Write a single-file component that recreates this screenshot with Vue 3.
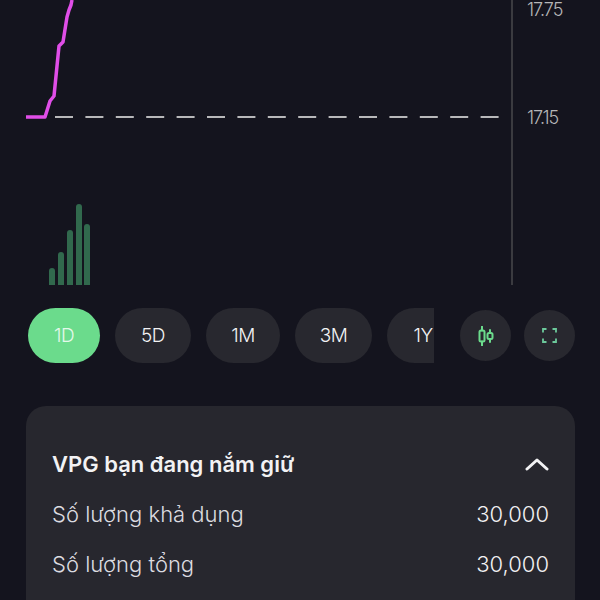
<template>
  <div class="screen">
    <div class="chart">
      <svg class="chart-svg" width="600" height="285" viewBox="0 0 600 285">
        <line x1="55" y1="117" x2="500" y2="117" class="ref-line" />
        <line x1="512" y1="0" x2="512" y2="285" class="axis-line" />
        <polyline :points="pricePoints" class="price-line" />
        <path
          v-for="bar in volumeBars"
          :key="bar.x"
          :d="`M${bar.x} 285V${bar.top + 3}a3 3 0 0 1 6 0V285Z`"
          class="volume-bar"
        />
      </svg>
      <span class="price-label top">17.75</span>
      <span class="price-label base">17.15</span>
    </div>

    <div class="controls">
      <div class="ranges">
        <button
          v-for="range in ranges"
          :key="range"
          type="button"
          class="range-btn"
          :class="{ active: range === activeRange }"
        >
          {{ range }}
        </button>
      </div>
      <button type="button" class="icon-btn" aria-label="Candles">
        <svg width="18" height="20" viewBox="0 0 18 20" fill="none" stroke="#6bdb8c" stroke-width="2">
          <path d="M5 0.5v4M5 15.5v4M13 4v3M13 13v3" stroke-linecap="round" />
          <rect x="2.5" y="4.5" width="5" height="11" rx="1.5" />
          <rect x="10.5" y="7" width="5" height="6" rx="1.5" />
        </svg>
      </button>
      <button type="button" class="icon-btn" aria-label="Fullscreen">
        <svg width="15" height="15" viewBox="0 0 15 15" fill="none" stroke="#6cc99b" stroke-width="1.8">
          <path d="M1 4.5V1h3.5M10.5 1H14v3.5M14 10.5V14h-3.5M4.5 14H1v-3.5" />
        </svg>
      </button>
    </div>

    <section class="holding">
      <div class="holding-head">
        <h2>VPG bạn đang nắm giữ</h2>
        <svg width="24" height="14" viewBox="0 0 24 14" fill="none" stroke="#f2f2f4" stroke-width="3" stroke-linecap="round" stroke-linejoin="round">
          <path d="M2 12L12 3l10 9" />
        </svg>
      </div>
      <div v-for="row in rows" :key="row.label" class="holding-row">
        <span>{{ row.label }}</span>
        <span class="value">{{ row.value }}</span>
      </div>
    </section>
  </div>
</template>

<script setup>
const pricePoints = '26,117 45,117 50,101 54,96 59,46 63,42 67,17 69,10 71,5 72,0'

const volumeBars = [
  { x: 49, top: 268 },
  { x: 58, top: 252 },
  { x: 67, top: 230 },
  { x: 76, top: 204 },
  { x: 84, top: 224 },
]

const ranges = ['1D', '5D', '1M', '3M', '1Y']
const activeRange = '1D'

const rows = [
  { label: 'Số lượng khả dụng', value: '30,000' },
  { label: 'Số lượng tổng', value: '30,000' },
]
</script>

<style scoped>
.screen {
  width: 600px;
  height: 600px;
  overflow: hidden;
  background: #14141e;
  font-family: Inter, "Noto Sans", sans-serif;
  color: #f2f2f4;
}
.chart {
  position: relative;
  height: 285px;
}
.chart-svg {
  display: block;
}
.ref-line {
  stroke: #b8b8ba;
  stroke-width: 2;
  stroke-dasharray: 18 12.4;
}
.axis-line {
  stroke: #3b3b40;
  stroke-width: 2;
}
.price-line {
  fill: none;
  stroke: #e04ee8;
  stroke-width: 3.5;
  stroke-linejoin: round;
}
.volume-bar {
  fill: #31694d;
}
.price-label {
  position: absolute;
  left: 527px;
  font-size: 18px;
  font-weight: 300;
  letter-spacing: -1px;
  line-height: 22px;
  color: #b6b6b8;
}
.price-label.top {
  top: -1px;
}
.price-label.base {
  top: 107px;
}
.controls {
  display: flex;
  align-items: center;
  padding: 23px 25px 0 28px;
}
.ranges {
  display: flex;
  gap: 15px;
  width: 406px;
  overflow: hidden;
  flex-shrink: 0;
}
.range-btn {
  flex: 0 0 76px;
  height: 55px;
  border: none;
  border-radius: 28px;
  padding: 0;
  background: #28282f;
  color: #f2f2f4;
  font: 300 19px Inter, "Noto Sans", sans-serif;
  letter-spacing: -0.5px;
}
.range-btn:nth-child(3) {
  flex-basis: 74px;
}
.range-btn:nth-child(4) {
  flex-basis: 77px;
}
.range-btn:nth-child(5) {
  flex-basis: 72px;
}
.range-btn.active {
  flex-basis: 72px;
  background: #6bdb8c;
  color: #e4f8ea;
}
.icon-btn {
  width: 51px;
  height: 51px;
  margin-left: 13px;
  border: none;
  border-radius: 50%;
  padding: 0;
  background: #28282f;
  display: flex;
  align-items: center;
  justify-content: center;
}
.controls .ranges + .icon-btn {
  margin-left: 26px;
}
.holding {
  margin: 43px 25px 0 26px;
  padding: 35px 26px 0 26px;
  height: 240px;
  box-sizing: border-box;
  border-radius: 20px;
  background: #27272e;
}
.holding-head {
  display: flex;
  align-items: center;
  justify-content: space-between;
  height: 46px;
  margin-bottom: 2px;
}
.holding-head h2 {
  margin: 0;
  font-size: 22px;
  font-weight: 600;
  letter-spacing: 0;
}
.holding-row {
  display: flex;
  align-items: center;
  justify-content: space-between;
  height: 50px;
  font-size: 22px;
  font-weight: 300;
  color: #dcdce0;
}
.holding-row .value {
  color: #f2f2f4;
}
</style>
